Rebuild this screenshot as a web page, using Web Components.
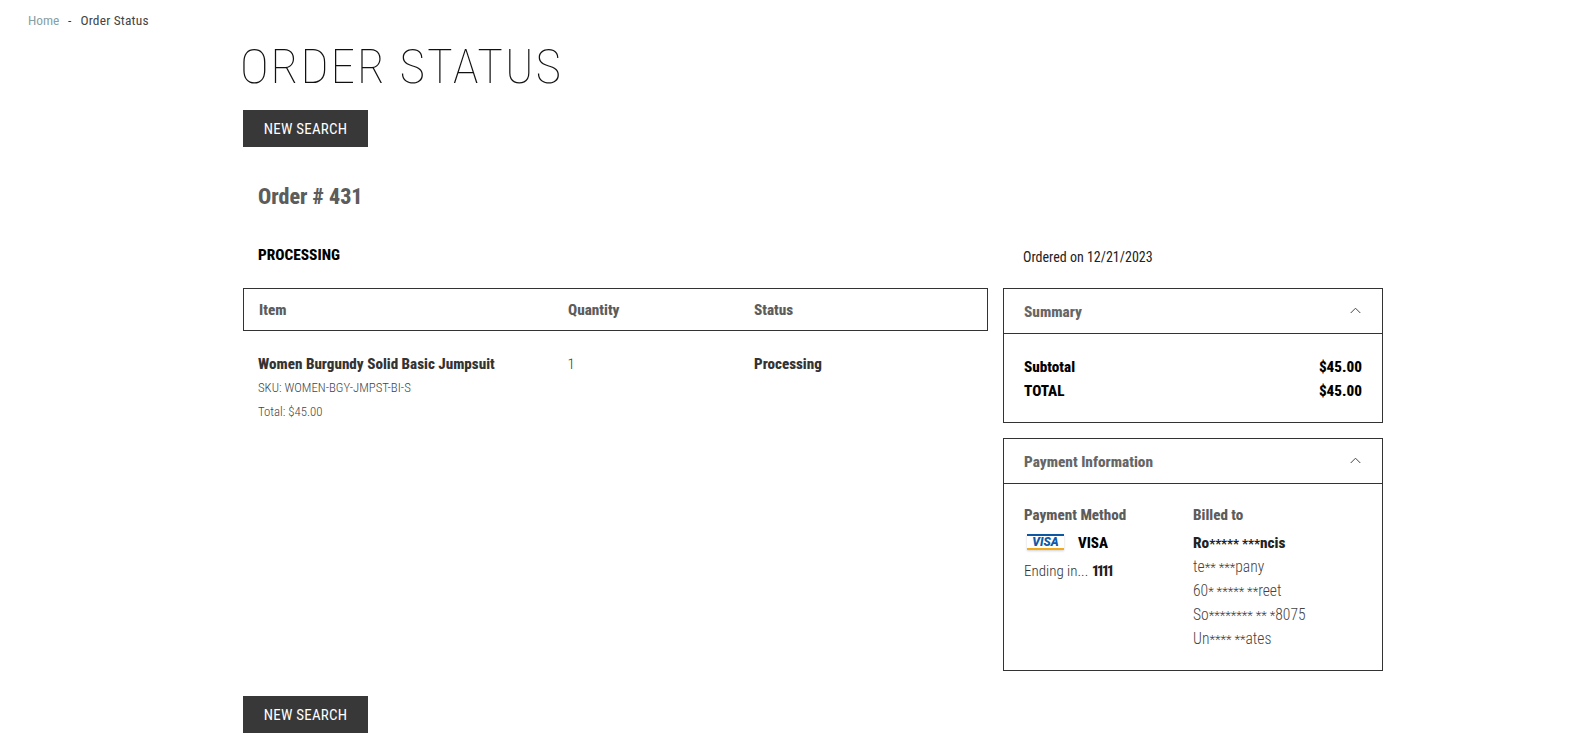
<!doctype html>
<html lang="en"><head><meta charset="utf-8"><title>Order Status</title>
<style>
html,body{margin:0;padding:0;background:#fff}
body{font-family:Roboto,"Liberation Sans",sans-serif;font-stretch:condensed;font-size:15px;color:#333;overflow:hidden}
</style></head><body>
<x-breadcrumb><a slot="a">Home</a><span slot="b">Order Status</span></x-breadcrumb>
<x-order-page>
  <h1 slot="title">ORDER STATUS</h1>
  <x-button slot="top">NEW SEARCH</x-button>
  <span slot="order">Order # 431</span>
  <span slot="state">PROCESSING</span>
  <span slot="date">Ordered on 12/21/2023</span>
  <x-items slot="items"></x-items>
  <x-panel slot="side" heading="Summary" style="height:135px"><x-summary></x-summary></x-panel>
  <x-panel slot="side" heading="Payment Information" style="height:233px"><x-payment></x-payment></x-panel>
  <x-button slot="bottom">NEW SEARCH</x-button>
</x-order-page>
<script>
function def(name,html,init){
  customElements.define(name,class extends HTMLElement{
    constructor(){super();this.attachShadow({mode:'open'}).innerHTML=html;}
    connectedCallback(){if(init)init(this);}
  });
}
def('x-breadcrumb',`<style>
:host{display:flex;align-items:center;height:42px;box-sizing:border-box;padding:0 0 0 28px;font-size:13.4px;line-height:18px;letter-spacing:.2px;color:#444}
::slotted(a){color:#86a0a4;letter-spacing:0}
.sep{margin:0 9px 0 8.5px;color:#333}
</style><slot name="a"></slot><span class="sep">-</span><slot name="b"></slot>`);
def('x-button',`<style>
:host{display:inline-flex;align-items:center;justify-content:center;width:125px;height:37px;background:#383838;color:#fff;font-size:15px;font-weight:400;letter-spacing:.2px}
</style><slot></slot>`);
def('x-order-page',`<style>
:host{display:block;width:1140px;margin-left:243px}
.title{height:68px}
::slotted(h1){margin:0;font-size:49px;line-height:50px;font-weight:100;letter-spacing:1.9px;color:#111;margin-left:-3px}
.order{margin:37px 0 0 15px;height:26px;line-height:26px;font-size:22px;font-weight:800;color:#5c5c5c}
.status{display:grid;grid-template-columns:745px 380px;column-gap:15px;margin-top:35px;height:43px;line-height:20px}
.state{padding-left:15px;font-size:15.3px;font-weight:800;color:#000}
.date{padding:2px 0 0 20px;font-size:14px;color:#222}
.grid{display:grid;grid-template-columns:745px 380px;column-gap:15px}
.side{display:flex;flex-direction:column;gap:15px}
.bottom{margin-top:25px}
.top{height:37px}
</style>
<div class="title"><slot name="title"></slot></div>
<div class="top"><slot name="top"></slot></div>
<div class="order"><slot name="order"></slot></div>
<div class="status"><div class="state"><slot name="state"></slot></div><div class="date"><slot name="date"></slot></div></div>
<div class="grid"><div><slot name="items"></slot></div><div class="side"><slot name="side"></slot></div></div>
<div class="bottom"><slot name="bottom"></slot></div>`);
def('x-items',`<style>
:host{display:block}
.head{display:grid;grid-template-columns:309px 186px 1fr}
.row{display:grid;grid-template-columns:309.5px 186.5px 1fr}
.head{box-sizing:border-box;height:43px;border:1px solid #333;align-items:center;padding-left:15px;font-size:15.2px;font-weight:800;color:#5c5c5c}
.row{padding:21px 0 0 15px;font-size:15px;color:#333}
.name,.st{font-weight:800;line-height:24px;color:#333;font-size:15.1px}
.q{line-height:24px;font-weight:300}
.sub{font-size:12.8px;line-height:24px;color:#444;font-weight:300}
</style>
<div class="head"><div>Item</div><div>Quantity</div><div>Status</div></div>
<div class="row"><div><div class="name">Women Burgundy Solid Basic Jumpsuit</div><div class="sub">SKU: WOMEN-BGY-JMPST-BI-S</div><div class="sub">Total: $45.00</div></div><div class="q">1</div><div class="st">Processing</div></div>`);
def('x-panel',`<style>
:host{display:block;box-sizing:border-box;border:1px solid #333}
.h{box-sizing:border-box;display:flex;justify-content:space-between;align-items:center;height:45px;padding:1px 21px 0 20px;border-bottom:1px solid #333;font-size:15.3px;font-weight:800;color:#666}
svg{display:block;margin-top:-3px}
</style>
<div class="h"><span class="t"></span><svg width="11" height="7" viewBox="0 0 11 7"><polyline points="0.7,6 5.5,1.2 10.3,6" fill="none" stroke="#444" stroke-width="1"/></svg></div>
<slot></slot>`,el=>{el.shadowRoot.querySelector('.t').textContent=el.getAttribute('heading');});
def('x-summary',`<style>
:host{display:block;padding:21px 20px 0;font-size:15.2px;font-weight:800;line-height:24px;color:#000}
div{display:flex;justify-content:space-between}
</style><div><span>Subtotal</span><span>$45.00</span></div><div><span>TOTAL</span><span>$45.00</span></div>`);
def('x-payment',`<style>
:host{display:grid;grid-template-columns:169px 1fr;padding:19px 20px 0;font-size:15px;line-height:24px;color:#444}
.l{font-weight:800;color:#5c5c5c;height:28px;line-height:24px;font-size:15.1px}
.b{font-weight:800;color:#222;height:24px;font-size:15.3px}
.card{display:flex;align-items:center;height:24px}
.card b{color:#000;margin-left:12px;font-weight:800}
svg{display:block;margin-left:1px}
.end{margin-top:4px;font-weight:300;color:#333}
.end b{color:#222;font-weight:800;letter-spacing:-2.6px}
.a{color:#444;font-weight:300;height:24px;font-size:15.6px}
i{font-style:normal;font-size:13px;letter-spacing:0;line-height:0}
</style>
<div><div class="l">Payment Method</div>
<div class="card"><svg width="41" height="20" viewBox="0 0 41 20"><defs><filter id="s" x="-10%" y="-10%" width="120%" height="130%"><feDropShadow dx="0" dy="1" stdDeviation="1" flood-color="#000" flood-opacity=".18"/></filter></defs><rect x="2" y="1" width="37" height="16" fill="#fff" filter="url(#s)"/><rect x="2" y="1" width="37" height="2" fill="#0b57a4"/><rect x="2" y="15" width="37" height="2" fill="#f2ab1e"/><text x="20.5" y="13.3" text-anchor="middle" style="font-family:Roboto;font-stretch:normal" font-size="12" font-weight="900" font-style="italic" fill="#0f5aa8">VISA</text></svg><b>VISA</b></div>
<div class="end">Ending in... <b>1111</b></div></div>
<div><div class="l">Billed to</div><div class="b">Ro<i>***** ***</i>ncis</div>
<div class="a">te<i>** ***</i>pany</div><div class="a">60<i>* ***** **</i>reet</div><div class="a">So<i>******** ** *</i>8075</div><div class="a">Un<i>**** **</i>ates</div></div>`);
</script>
</body></html>
